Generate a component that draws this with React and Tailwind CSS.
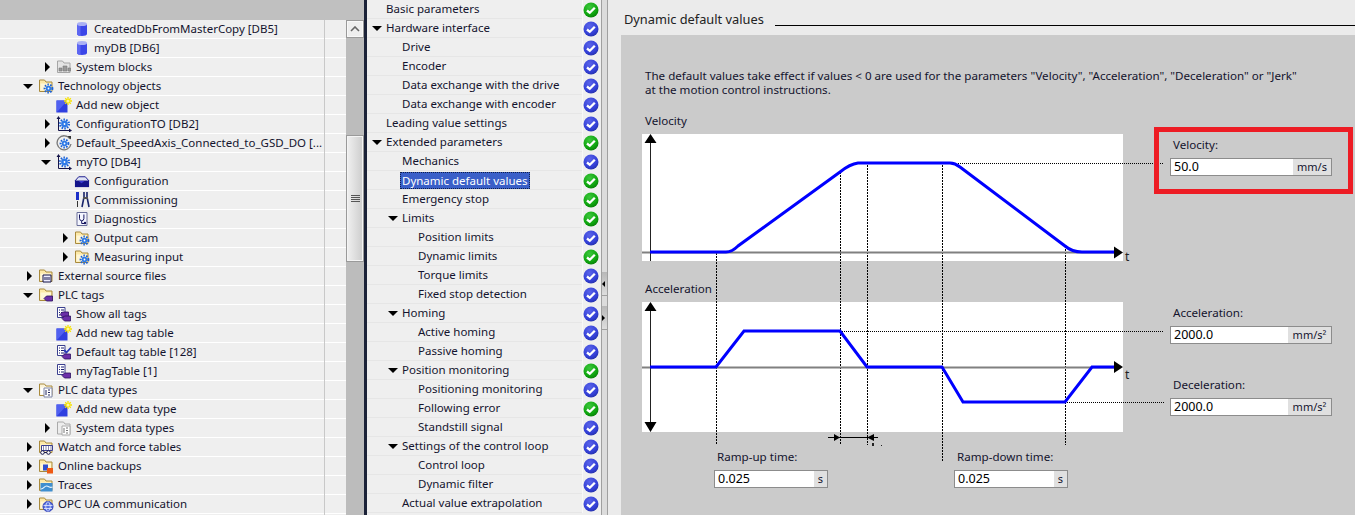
const FolderBase = ({ children, light }) => (
  <svg width="16" height="16" viewBox="0 0 16 16">
    <path d="M1.500 13.500V2h5l1.500 2h6v9.500z" fill={light ? '#fbf3d8' : '#fde9a8'} stroke="#a98a3c" />
    <path d="M2.500 12.500V5.500h10.500v7z" fill={light ? '#ffffff' : '#fff6d6'} />
    {children}
  </svg>
)

const Gear = ({ x = 10.500, y = 10.500, r = 3.200 }) => (
  <g>
    <circle cx={x} cy={y} r={r + 0.7} fill="none" stroke="#1c62d8" strokeWidth="2" strokeDasharray="1.500 1.300" />
    <circle cx={x} cy={y} r={r - 0.4} fill="#2f7be8" />
    <circle cx={x} cy={y} r="0.9" fill="#fff" />
  </g>
)

const Tag = ({ x = 7, y = 10 }) => (
  <path d={`M${x} ${y + 2.500}l2.500-2.500h6v5h-6z`} fill="#6b2fa8" stroke="#2c1060" strokeWidth="0.800" />
)

const ListSheet = () => (
  <g>
    <path d="M1.500 1.500h7.500v10h-7.500z" fill="#fff" stroke="#3a3f8f" />
    <path d="M3 4h1M5 4h3M3 6.500h1M5 6.500h3M3 9h1M5 9h3" stroke="#1b1f70" />
  </g>
)

const icons = {
  db: (
    <svg width="16" height="16" viewBox="0 0 16 16">
      <path d="M3 3v10c0 1.200 2.200 2 5 2s5-.8 5-2V3z" fill="#3b46e8" />
      <path d="M3 3v10c0 1.200 2 2 3.500 2V5z" fill="#5d66f2" />
      <ellipse cx="8" cy="3" rx="5" ry="2" fill="#aab0f4" />
    </svg>
  ),
  sys: (
    <svg width="16" height="16" viewBox="0 0 16 16">
      <path d="M1.500 13.500V2h5l1.500 2h6v9.500z" fill="#e4e4e4" stroke="#a5a5a5" />
      <path d="M3 9h3v3h-3zM7 7h4v5h-4zM12 9h2.500v3h-2.500z" fill="#9a9a9a" stroke="#777" strokeWidth="0.600" />
    </svg>
  ),
  folderGear: <FolderBase><Gear /></FolderBase>,
  add: (
    <svg width="16" height="16" viewBox="0 0 16 16">
      <path d="M0.500 3.500h11v12h-11z" fill="#2f3fe0" />
      <path d="M0.500 3.500h11l-11 12z" fill="#5060f0" />
      <path d="M12 0v8M8 4h8M9.200 1.200l5.600 5.600M14.800 1.200l-5.600 5.600" stroke="#f7e200" strokeWidth="1.300" />
      <circle cx="12" cy="4" r="1.500" fill="#fff7a0" />
    </svg>
  ),
  axis: (
    <svg width="16" height="16" viewBox="0 0 16 16">
      <path d="M2.500 1v13.500H15" fill="none" stroke="#15154a" />
      <path d="M2.500 0l-2 3h4zM16 14.500l-3-2v4z" fill="#15154a" />
      <Gear x={8.500} y={8} r={3.800} />
    </svg>
  ),
  speed: (
    <svg width="16" height="16" viewBox="0 0 16 16">
      <path d="M14 4a7 7 0 1 0 1 5" fill="none" stroke="#777" strokeWidth="1.300" />
      <path d="M11.500 1l3.500 0v3.500z" fill="#333" />
      <Gear x={8.500} y={8.500} r={3.200} />
    </svg>
  ),
  config: (
    <svg width="17" height="16" viewBox="0 0 17 16">
      <path d="M1 8l4-4.500h7l4 4.500z" fill="#dfe3f5" stroke="#14148a" />
      <path d="M1 8h15v6.500h-15z" fill="#14148a" />
      <path d="M5 8l3 2.500 3-2.500" fill="#3a3ad0" />
    </svg>
  ),
  tools: (
    <svg width="16" height="16" viewBox="0 0 16 16">
      <path d="M2 0h3v8h-3z" fill="#1c2fc8" />
      <path d="M3 9h1v6h-1z" fill="#333" />
      <path d="M10 0v5l-2 10M13 0v5l2 10" fill="none" stroke="#18246a" strokeWidth="1.600" />
      <path d="M9 6h5" stroke="#555" strokeWidth="2" />
    </svg>
  ),
  diag: (
    <svg width="16" height="16" viewBox="0 0 16 16">
      <path d="M3 1.500h10v13h-10z" fill="#f4f6ff" stroke="#6a6f9a" />
      <path d="M5.500 3.500v4a2.200 2.200 0 0 0 4.400 0v-4M7.700 10v2.500h2.500" fill="none" stroke="#15155e" />
      <circle cx="11" cy="12" r="1.200" fill="#15155e" />
    </svg>
  ),
  external: (
    <FolderBase>
      <path d="M5 7h8v7h-8z" fill="#eef" stroke="#15154a" />
      <path d="M7 9v3M9 9v3M11 9v3" stroke="#15154a" />
    </FolderBase>
  ),
  tagFolder: <FolderBase><Tag x={6} y={9} /></FolderBase>,
  allTags: (
    <svg width="16" height="16" viewBox="0 0 16 16">
      <ListSheet />
      <Tag x={4} y={6} />
      <Tag x={6} y={10} />
    </svg>
  ),
  defaultTags: (
    <svg width="16" height="16" viewBox="0 0 16 16">
      <ListSheet />
      <path d="M8 6l2.500 2.500 4.500-5" fill="none" stroke="#2b3bb8" strokeWidth="1.800" />
      <Tag x={6} y={10} />
    </svg>
  ),
  tagTable: (
    <svg width="16" height="16" viewBox="0 0 16 16">
      <ListSheet />
      <Tag x={6} y={10} />
    </svg>
  ),
  typeFolder: (
    <FolderBase light>
      <path d="M6 6h8v9h-8z" fill="#fff" stroke="#7f86a8" />
      <path d="M8 8v5M10 8h2M10 10.500h2M10 13h2" stroke="#22265e" />
    </FolderBase>
  ),
  sysTypes: (
    <svg width="16" height="16" viewBox="0 0 16 16">
      <path d="M1.500 14V2h6l1.500 2h5v10z" fill="#ededed" stroke="#aaa" />
      <path d="M6 6h8v9h-8z" fill="#fff" stroke="#aaa" />
      <path d="M8 8v5M10 8h2M10 10.500h2M10 13h2" stroke="#777" />
    </svg>
  ),
  watch: (
    <FolderBase>
      <path d="M3.500 6.500h11v5h-11z" fill="#fff" stroke="#3a3f8f" />
      <path d="M5 8h1M7.500 8h1M10 8h1M12.500 8h1M5 10h1M7.500 10h1M10 10h1M12.500 10h1" stroke="#15155e" />
      <circle cx="4.500" cy="13.500" r="1.800" fill="#fff" stroke="#15154a" />
      <circle cx="10.500" cy="13.500" r="1.800" fill="#fff" stroke="#15154a" />
      <path d="M6.300 13.500h2.400" stroke="#15154a" />
    </FolderBase>
  ),
  backup: (
    <FolderBase>
      <path d="M5 6.500h5v6h-5z" fill="#2f4fd0" />
      <path d="M9 10h6v5.500h-6z" fill="#ee5a14" />
    </FolderBase>
  ),
  traces: (
    <FolderBase>
      <path d="M2.500 6h12v8.500h-12z" fill="#3f8fd0" />
      <path d="M3 12c3 0 3-3 5.500-3s3 2.500 6 1" fill="none" stroke="#e6f4ff" strokeWidth="1.200" />
    </FolderBase>
  ),
  opc: (
    <FolderBase>
      <circle cx="10" cy="10.500" r="5" fill="#5a73e0" stroke="#2b3bb8" />
      <path d="M5.500 9.500h9M6 12.500h8M10 5.500c-3 3-3 7 0 10M10 5.500c3 3 3 7 0 10" fill="none" stroke="#e6ebff" strokeWidth="0.800" />
    </FolderBase>
  ),
}

const treeRows = [
  { text: 'CreatedDbFromMasterCopy [DB5]', level: 2, icon: 'db' },
  { text: 'myDB [DB6]', level: 2, icon: 'db' },
  { text: 'System blocks', level: 1, icon: 'sys', arrow: 'right' },
  { text: 'Technology objects', level: 0, icon: 'folderGear', arrow: 'down' },
  { text: 'Add new object', level: 1, icon: 'add' },
  { text: 'ConfigurationTO [DB2]', level: 1, icon: 'axis', arrow: 'right' },
  { text: 'Default_SpeedAxis_Connected_to_GSD_DO [...', level: 1, icon: 'speed', arrow: 'right' },
  { text: 'myTO [DB4]', level: 1, icon: 'axis', arrow: 'down' },
  { text: 'Configuration', level: 2, icon: 'config' },
  { text: 'Commissioning', level: 2, icon: 'tools' },
  { text: 'Diagnostics', level: 2, icon: 'diag' },
  { text: 'Output cam', level: 2, icon: 'folderGear', arrow: 'right' },
  { text: 'Measuring input', level: 2, icon: 'folderGear', arrow: 'right' },
  { text: 'External source files', level: 0, icon: 'external', arrow: 'right' },
  { text: 'PLC tags', level: 0, icon: 'tagFolder', arrow: 'down' },
  { text: 'Show all tags', level: 1, icon: 'allTags' },
  { text: 'Add new tag table', level: 1, icon: 'add' },
  { text: 'Default tag table [128]', level: 1, icon: 'defaultTags' },
  { text: 'myTagTable [1]', level: 1, icon: 'tagTable' },
  { text: 'PLC data types', level: 0, icon: 'typeFolder', arrow: 'down' },
  { text: 'Add new data type', level: 1, icon: 'add' },
  { text: 'System data types', level: 1, icon: 'sysTypes', arrow: 'right' },
  { text: 'Watch and force tables', level: 0, icon: 'watch', arrow: 'right' },
  { text: 'Online backups', level: 0, icon: 'backup', arrow: 'right' },
  { text: 'Traces', level: 0, icon: 'traces', arrow: 'right' },
  { text: 'OPC UA communication', level: 0, icon: 'opc', arrow: 'right' },
  { text: '', level: 0 },
]

const navRows = [
  ['Basic parameters', 0, 'g'],
  ['Hardware interface', 0, 'b', true],
  ['Drive', 1, 'b'],
  ['Encoder', 1, 'b'],
  ['Data exchange with the drive', 1, 'b'],
  ['Data exchange with encoder', 1, 'b'],
  ['Leading value settings', 0, 'b'],
  ['Extended parameters', 0, 'g', true],
  ['Mechanics', 1, 'b'],
  ['Dynamic default values', 1, 'g', false, true],
  ['Emergency stop', 1, 'g'],
  ['Limits', 1, 'g', true],
  ['Position limits', 2, 'b'],
  ['Dynamic limits', 2, 'g'],
  ['Torque limits', 2, 'b'],
  ['Fixed stop detection', 2, 'b'],
  ['Homing', 1, 'b', true],
  ['Active homing', 2, 'b'],
  ['Passive homing', 2, 'b'],
  ['Position monitoring', 1, 'g', true],
  ['Positioning monitoring', 2, 'b'],
  ['Following error', 2, 'g'],
  ['Standstill signal', 2, 'b'],
  ['Settings of the control loop', 1, 'b', true],
  ['Control loop', 2, 'b'],
  ['Dynamic filter', 2, 'b'],
  ['Actual value extrapolation', 1, 'b'],
]

const treeIndent = ['pl-[23px]', 'pl-[41px]', 'pl-[59px]']
const navIndent = ['pl-[19px]', 'pl-[35px]', 'pl-[51px]']

function Arrow({ dir }) {
  if (dir === 'down') {
    return <span className="block w-0 h-0 border-x-[5px] border-x-transparent border-t-[5px] border-t-black" />
  }
  return <span className="block w-0 h-0 ml-[2px] border-y-[5px] border-y-transparent border-l-[5px] border-l-black" />
}

function TreeRow({ row }) {
  return (
    <div className={`flex items-center h-[19px] shrink-0 border-b border-white ${treeIndent[row.level]}`}>
      <span className="flex justify-center items-center w-[10px] shrink-0">
        {row.arrow && <Arrow dir={row.arrow} />}
      </span>
      <span className="flex items-center w-[16px] h-[16px] ml-[5px] mr-[4px] shrink-0">{icons[row.icon]}</span>
      <span className="whitespace-nowrap">{row.text}</span>
    </div>
  )
}

function StatusIcon({ color }) {
  return (
    <svg width="16" height="16" viewBox="0 0 16 16" className="shrink-0">
      <circle cx="8" cy="8" r="7.500" fill={color === 'g' ? 'url(#statusGreen)' : 'url(#statusBlue)'} />
      <path d="M4 8.500l2.800 2.300 5-5" fill="none" stroke="#fff" strokeWidth="2.300" />
    </svg>
  )
}

function NavRow({ text, level, status, open, selected }) {
  return (
    <div className="flex items-center h-[19px] shrink-0">
      <div className={`relative flex items-center w-[215px] h-full border-b border-[#e6e6e6] ${navIndent[level]}`}>
        {open && (
          <span className="absolute -ml-[14px]">
            <Arrow dir="down" />
          </span>
        )}
        <span className={selected ? 'px-px -ml-[2px] h-[17px] leading-[15px] bg-[#3a5fc8] text-white border border-dotted border-[#10204a]' : ''}>
          {text}
        </span>
      </div>
      <div className="flex justify-center items-center w-[17px] h-full border-l border-[#f8f8f8]">
        <StatusIcon color={status} />
      </div>
    </div>
  )
}

function Field({ label, value, unit, suffixClass, widthClass }) {
  return (
    <div className={widthClass}>
      <div className="h-[14px] pl-[3px] leading-[14px] whitespace-nowrap">{label}</div>
      <div className="flex mt-[6px] h-[18px] bg-white border border-[#8c8c8c]">
        <span className="flex-1 pl-[3px] leading-[15px] text-[12.500px] text-black">{value}</span>
        <span className={`flex justify-center bg-[#e0e0e0] leading-[15px] text-[11px] ${suffixClass}`}>{unit}</span>
      </div>
    </div>
  )
}

function Diagram() {
  return (
    <svg className="absolute left-0 top-0" width="734" height="480" viewBox="621 35 734 480">
      <g stroke="#000" shapeRendering="crispEdges">
        <path strokeDasharray="2 1" d="M716.500 253V445M840.500 172V445M867.500 165V445M942.500 165V462M1065.500 246V445" />
        <path strokeDasharray="1 1" d="M958 163.500H1163M840 331.500H1163M1065 402.500H1164" />
      </g>

      <path d="M642 252.500H1116M642 367.500H1116" stroke="#808080" strokeWidth="2" />
      <path d="M650.500 140V261M650.500 308V426" stroke="#222" strokeWidth="1" />

      <path d="M650 252H726Q732 252 738 246L840 172Q850 164 858 163H950Q955 163 960 167L1065 246Q1072 252 1082 252H1115" fill="none" stroke="#0000ff" strokeWidth="3" />
      <path d="M650 367H716L744 331H840L867 367H942L963 402H1065L1092 367H1115" fill="none" stroke="#0000ff" strokeWidth="3" />

      <path d="M650.500 134L656.500 143H644.500zM650.500 302L656.500 311H644.500zM650.500 432L656.500 422H644.500z" fill="#000" />
      <path d="M1123 252.500L1114 246.500V258.500zM1123 367L1114 361V373z" fill="#000" />

      <text x="1125" y="261" fontSize="12" fill="#222">t</text>
      <text x="1125" y="379" fontSize="12" fill="#222">t</text>

      <path d="M828 437.500H878" stroke="#000" />
      <path d="M840 437.500L834 434V441zM867 437.500L874 434V441z" fill="#000" />
      <path d="M872 443h2v3h-2zM881 445h1v1h-1z" fill="#222" />
    </svg>
  )
}

export default function App() {
  return (
    <div className="flex w-[1355px] h-[515px] overflow-hidden bg-[#ebebeb] text-[11.500px] text-[#14142e] font-['Noto_Sans',sans-serif]">
      <svg className="absolute w-0 h-0">
        <defs>
          <radialGradient id="statusGreen" cx="40%" cy="30%" r="75%">
            <stop offset="0%" stopColor="#3cc83c" />
            <stop offset="70%" stopColor="#0ea40e" />
            <stop offset="100%" stopColor="#0a7a0a" />
          </radialGradient>
          <radialGradient id="statusBlue" cx="40%" cy="30%" r="75%">
            <stop offset="0%" stopColor="#5a64ea" />
            <stop offset="70%" stopColor="#333fd6" />
            <stop offset="100%" stopColor="#2530a8" />
          </radialGradient>
        </defs>
      </svg>

      {/* project tree */}
      <div className="flex flex-col w-[364px] shrink-0 bg-[#c0c0c0]">
        <div className="h-[20px] shrink-0" />
        <div className="flex flex-1 min-h-0">
          <div className="flex flex-col w-[346px] bg-[#efefef] overflow-hidden">
            <div className="w-[346px]">
              {treeRows.map((row, i) => (
                <div key={i} className="flex">
                  <div className="w-[325px] border-r border-[#c8c8c8]">
                    <TreeRow row={row} />
                  </div>
                  <div className="flex-1 border-b border-white h-[19px]" />
                </div>
              ))}
            </div>
          </div>
          <div className="flex flex-col w-[18px] bg-[#bcbcbc]">
            <div className="flex justify-center items-center h-[18px] bg-[#eeeeee] border-2 border-[#f8f8f8] outline outline-[#9a9a9a] -outline-offset-1">
              <svg width="10" height="6" viewBox="0 0 10 6">
                <path d="M1 5l4-4 4 4" fill="none" stroke="#666" strokeWidth="1.600" />
              </svg>
            </div>
            <div className="flex justify-center items-center h-[127px] mt-[97px] bg-gradient-to-r from-[#eeeeee] to-[#cfcfcf] border-2 border-[#f4f4f4] outline outline-[#9a9a9a] -outline-offset-1">
              <svg width="9" height="8" viewBox="0 0 9 8">
                <path d="M0 .5h9M0 2.500h9M0 4.500h9M0 6.500h9" stroke="#555" />
              </svg>
            </div>
          </div>
        </div>
      </div>
      <div className="w-[3px] shrink-0 bg-[#1b2238]" />

      {/* settings nav */}
      <div className="flex flex-col w-[234px] shrink-0 bg-[#efefef] overflow-hidden">
        {navRows.map(([text, level, status, open, selected]) => (
          <NavRow key={text} text={text} level={level} status={status} open={open} selected={selected} />
        ))}
        <div className="h-[2px]" />
      </div>

      {/* splitter */}
      <div className="flex flex-col w-[7px] shrink-0 bg-[#dcdcdc] border-x border-[#a0a0a0]">
        <div className="flex items-center h-[24px] mt-[272px] bg-gradient-to-b from-[#b8b8b8] to-[#dedede] border-b border-[#a0a0a0]">
          <span className="w-0 h-0 border-y-[3px] border-y-transparent border-r-[3px] border-r-black" />
        </div>
        <div className="flex items-center h-[24px] mt-[10px] bg-gradient-to-b from-[#b8b8b8] to-[#dedede] border-b border-[#a0a0a0]">
          <span className="w-0 h-0 border-y-[3px] border-y-transparent border-l-[3px] border-l-black" />
        </div>
      </div>

      {/* content */}
      <div className="flex flex-col flex-1 min-w-0">
        <div className="flex h-[35px] shrink-0 pl-[16px] pt-[10px]">
          <span className="h-[18px] leading-[18px] text-[12.800px] text-[#222] whitespace-nowrap">Dynamic default values</span>
          <span className="flex-1 h-px mt-[15px] ml-[11px] bg-black" />
        </div>
        <div className="relative flex-1 ml-[13px] pl-[21px] pt-[34px] bg-[#cbcbcb] text-[11.600px]">
          <Diagram />
          <div className="relative pl-[3px] leading-[13.500px] whitespace-nowrap">
            <p>The default values take effect if values &lt; 0 are used for the parameters "Velocity", "Acceleration", "Deceleration" or "Jerk"</p>
            <p>at the motion control instructions.</p>
          </div>

          <div className="flex mt-[18px]">
            <div className="w-[481px] shrink-0">
              <div className="h-[14px] pl-[3px] leading-[14px]">Velocity</div>
              <div className="h-[127px] mt-[6px] bg-white" />
            </div>
            <div className="relative z-10 w-[199px] h-[67px] ml-[31px] mt-[13px] pl-[11px] pt-[6px] border-[5px] border-[#ed1c24]">
              <Field label="Velocity:" value="50.0" unit="mm/s" suffixClass="w-[38px]" widthClass="w-[162px]" />
            </div>
          </div>

          <div className="flex mt-[21px]">
            <div className="w-[481px] shrink-0">
              <div className="h-[14px] pl-[3px] leading-[14px]">Acceleration</div>
              <div className="h-[130px] mt-[6px] bg-white" />
            </div>
            <div className="relative flex flex-col gap-[34px] ml-[47px] mt-[24px]">
              <Field label="Acceleration:" value="2000.0" unit="mm/s²" suffixClass="w-[43px]" widthClass="w-[162px]" />
              <Field label="Deceleration:" value="2000.0" unit="mm/s²" suffixClass="w-[43px]" widthClass="w-[162px]" />
            </div>
          </div>

          <div className="relative flex gap-[126px] mt-[18px] ml-[72px]">
            <Field label="Ramp-up time:" value="0.025" unit="s" suffixClass="w-[13px]" widthClass="w-[114px]" />
            <Field label="Ramp-down time:" value="0.025" unit="s" suffixClass="w-[13px]" widthClass="w-[114px]" />
          </div>
        </div>
      </div>
    </div>
  )
}
